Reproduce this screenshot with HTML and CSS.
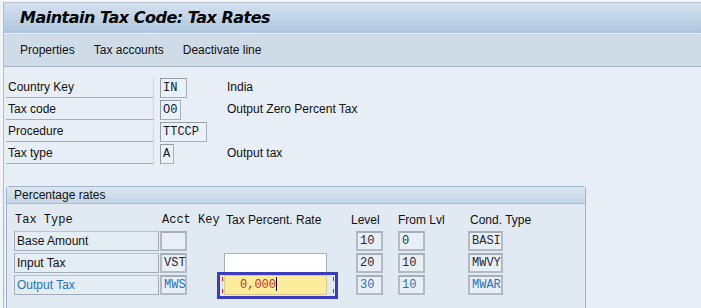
FILE: index.html
```html
<!DOCTYPE html>
<html>
<head>
<meta charset="utf-8">
<link rel="stylesheet" href="styles.css">
</head>
<body>
<div class="window">
  <div class="titlebar"><h1 class="title">Maintain Tax Code: Tax Rates</h1></div>
  <div class="toolbar">
    <span class="tb-item">Properties</span>
    <span class="tb-item">Tax accounts</span>
    <span class="tb-item">Deactivate line</span>
  </div>
  <div class="content">
    <div class="form">
      <div class="lbl">Country Key</div>
      <div class="fcell"><span class="field w27">IN</span></div>
      <div class="desc">India</div>

      <div class="lbl">Tax code</div>
      <div class="fcell"><span class="field w20">O0</span></div>
      <div class="desc">Output Zero Percent Tax</div>

      <div class="lbl">Procedure</div>
      <div class="fcell"><span class="field w47">TTCCP</span></div>
      <div class="desc"></div>

      <div class="lbl">Tax type</div>
      <div class="fcell"><span class="field w13">A</span></div>
      <div class="desc">Output tax</div>
    </div>

    <div class="group">
      <div class="group-head">Percentage rates</div>
      <div class="group-body">
        <div class="rates">
          <div class="hd mono hd-type">Tax Type</div>
          <div class="hd mono hd-acct">Acct Key</div>
          <div class="hd hd-rate">Tax Percent. Rate</div>
          <div class="hd hd-level">Level</div>
          <div class="hd hd-from">From Lvl</div>
          <div class="hd hd-cond">Cond. Type</div>

          <div><span class="tcell">Base Amount</span></div>
          <div><span class="box w27 mono"></span></div>
          <div></div>
          <div><span class="box w27 mono lvl">10</span></div>
          <div><span class="box w27 mono">0</span></div>
          <div><span class="box w34 mono">BASI</span></div>

          <div><span class="tcell">Input Tax</span></div>
          <div><span class="box w27 mono">VST</span></div>
          <div><span class="inp"></span></div>
          <div><span class="box w27 mono lvl">20</span></div>
          <div><span class="box w27 mono">10</span></div>
          <div><span class="box w34 mono">MWVY</span></div>

          <div><span class="tcell blue">Output Tax</span></div>
          <div><span class="box w27 mono blue">MWS</span></div>
          <div>
            <span class="inp focus mono">0,000<span class="caret"></span>
              <span class="tick tl"></span><span class="tick bl"></span>
              <span class="tick tr"></span><span class="tick br"></span>
            </span>
          </div>
          <div><span class="box w27 mono lvl blue">30</span></div>
          <div><span class="box w27 mono blue">10</span></div>
          <div><span class="box w34 mono blue">MWAR</span></div>
        </div>
      </div>
    </div>
  </div>
</div>
</body>
</html>
```

FILE: styles.css
```css
* { box-sizing: border-box; }
html, body { margin: 0; padding: 0; }
body {
  background: #f2f4f7;
  font-family: "Liberation Sans", Arial, sans-serif;
  font-size: 12px;
  color: #1b1b1b;
  width: 701px;
  height: 308px;
  overflow: hidden;
}
.window {
  margin: 2px 0 0 3px;
  border-left: 1px solid #b3bcc8;
  border-top: 1px solid #b8c0cc;
  background: #e7eef6;
  height: 306px;
}
.titlebar {
  height: 31px;
  background: linear-gradient(#d5e2ef, #adc5de);
  border-bottom: 1px solid #e9f0f7;
  padding-left: 16px;
  display: flex;
  align-items: center;
}
.title {
  margin: 0 0 1px 0;
  font-family: "DejaVu Sans", Verdana, sans-serif;
  font-weight: bold;
  font-style: italic;
  font-size: 16px;
  letter-spacing: -0.5px;
  color: #000;
}
.toolbar {
  height: 33px;
  background: #cfdce8;
  border-bottom: 1px solid #a6b4c4;
  display: flex;
  align-items: center;
  padding-left: 16px;
  gap: 19px;
  font-size: 12px;
  color: #111;
}
.content {
  padding: 10px 0 0 2px;
}
.form {
  display: grid;
  grid-template-columns: 148px 61px auto;
  column-gap: 6px;
  row-gap: 1px;
  align-items: center;
}
.lbl {
  height: 21px;
  line-height: 20px;
  padding-left: 2px;
  border-bottom: 1px solid #a3aebb;
  border-right: 1px solid #d0d9e3;
  color: #111;
}
.fcell { height: 21px; display: flex; align-items: center; }
.desc { height: 21px; line-height: 20px; color: #111; }
.mono { font-family: "Liberation Mono", "Courier New", monospace; }
.field {
  display: inline-block;
  height: 20px;
  line-height: 18px;
  padding-left: 2px;
  border: 1px solid #a8b1bb;
  border-top-color: #949ea9;
  border-left-color: #949ea9;
  background: #ebf1f8;
  font-family: "Liberation Mono", "Courier New", monospace;
  font-size: 12px;
  color: #14142a;
  white-space: nowrap;
  overflow: hidden;
}
.w13 { width: 14px; }
.w20 { width: 21px; }
.w27 { width: 27px; }
.w34 { width: 35px; }
.w47 { width: 47px; }

.group {
  margin: 22px 0 0 0;
  width: 580px;
  border: 1px solid #9fb4cb;
  border-radius: 3px 3px 0 0;
  height: 130px;
}
.group-head {
  height: 17px;
  line-height: 17px;
  padding-left: 7px;
  background: linear-gradient(#dde7f2, #c2d4e7);
  border-bottom: 1px solid #a9bdd2;
  color: #111;
}
.group-body {
  background: #e1eaf3;
  height: 112px;
  padding: 7px 0 0 7px;
}
.rates {
  display: grid;
  grid-template-columns: 146px 64px 127px 47px 70px 80px;
  grid-template-rows: 18px 20px 20px 20px;
  row-gap: 2px;
  align-items: center;
}
.rates > div { height: 20px; display: flex; align-items: center; }
.rates > .hd { height: 18px; align-items: center; color: #111; }
.hd-type { padding-left: 1px; }
.hd-acct { padding-left: 2px; }
.hd-rate { padding-left: 2px; }
.hd-cond { padding-left: 2px; }
.tcell {
  display: block;
  width: 145px;
  height: 20px;
  line-height: 18px;
  padding-left: 2px;
  border: 1px solid #a3adb8;
  border-top-color: #b9c3cd;
  background: #e4ecf4;
  color: #111;
}
.box {
  display: block;
  height: 20px;
  line-height: 16px;
  padding-left: 2px;
  border: 2px solid #b2bac3;
  border-top-color: #a6aeb8;
  background: #e9eff6;
  font-size: 12px;
  color: #2a2a33;
  white-space: nowrap;
}
.lvl { margin-left: 5px; }
.blue { color: #2a72b8 !important; }
.inp {
  display: block;
  position: relative;
  width: 103px;
  height: 20px;
  border: 1px solid #a9b2bc;
  background: #ffffff;
}
.inp.focus {
  background: #fcec9c;
  border-color: #d9cc8a;
  color: #d42a2a;
  font-size: 12px;
  line-height: 18px;
  padding-left: 15px;
}
.inp.focus::after {
  content: "";
  position: absolute;
  left: -8px;
  right: -12px;
  top: -4px;
  bottom: -5px;
  border: 3px solid #3c3cbc;
}
.caret {
  display: inline-block;
  width: 1px;
  height: 14px;
  background: #000;
  vertical-align: -3px;
}
.tick {
  position: absolute;
  width: 1px;
  height: 4px;
  background: #d22;
}
.tl { left: -3px; top: 1px; }
.bl { left: -3px; bottom: 1px; }
.tr { right: -8px; top: 1px; }
.br { right: -8px; bottom: 1px; }
```
